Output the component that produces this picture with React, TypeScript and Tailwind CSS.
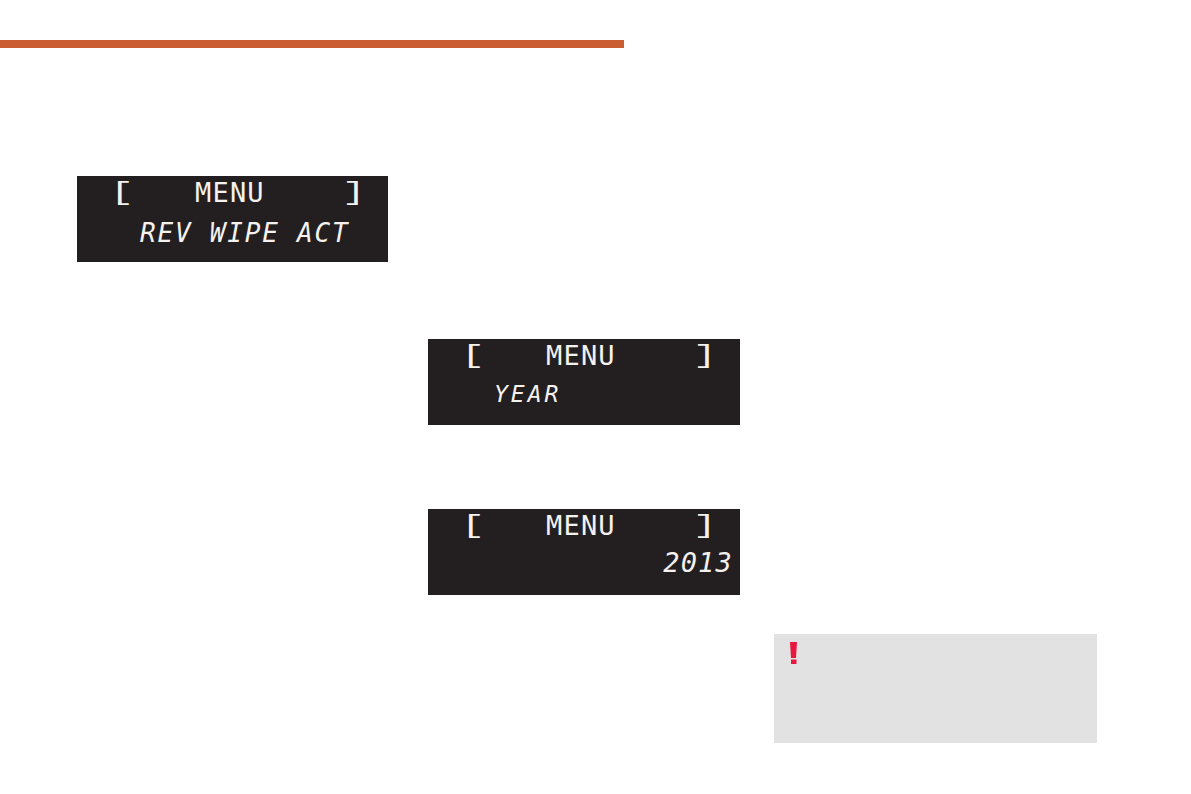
const lcd = "font-['DejaVu_Sans_Mono',monospace] text-[#f4f1ee] whitespace-pre";
const bracket = "inline-block w-[12px] font-['Liberation_Mono',monospace] text-[25px] leading-[22px] text-[#f4f1ee]";

// one of the dark LCD panels from the manual page
const Display = ({ children }: { children: React.ReactNode }) => (
  <div className="h-[86px] w-full bg-[#231f20] pt-[6px]">
    <div className="flex h-[22px] items-center pl-[38px]">
      <span className={`${bracket} origin-left -translate-x-[5px] translate-y-[1px] scale-x-[1.6]`}>[</span>
      <span className={`ml-[68px] text-[27px] leading-[22px] tracking-[1.2px] ${lcd}`}>MENU</span>
      <span className={`${bracket} ml-[83px] origin-right translate-x-[1px] translate-y-[1px] scale-x-[1.6] text-right`}>]</span>
    </div>
    {children}
  </div>
);

const App = () => {
  return (
    <div className="h-[794px] w-[1191px] overflow-hidden bg-white">
      <div className="mt-[40px] h-[8px] w-[624px] bg-[#cb5d33]" />

      <div className="flex pl-[77px]">
        <div className="w-[311px] pt-[128px]">
          <Display>
            <p className={`mt-[18px] pl-[63px] text-[26px] leading-[22px] tracking-[1.8px] italic ${lcd}`}>REV WIPE ACT</p>
          </Display>
        </div>

        <div className="ml-[40px] flex w-[312px] flex-col gap-[84px] pt-[291px]">
          <Display>
            <p className={`mt-[16px] pl-[66px] text-[23px] leading-[22px] tracking-[3px] italic ${lcd}`}>YEAR</p>
          </Display>
          <Display>
            <p className={`mt-[15px] pr-[7px] text-right text-[27px] leading-[22px] tracking-[1.2px] italic ${lcd}`}>2013</p>
          </Display>
        </div>

        <div className="ml-[34px] w-[323px] pt-[586px]">
          <div className="h-[109px] bg-[#e2e2e2] pl-[16px] pt-[8px]">
            <svg width="7" height="22" viewBox="0 0 7 22" className="block">
              <path d="M0 0H7L6 16H1Z M1 17.5H6.5V22H1Z" fill="#e8173f" />
            </svg>
          </div>
        </div>
      </div>
    </div>
  );
};

export default App;
